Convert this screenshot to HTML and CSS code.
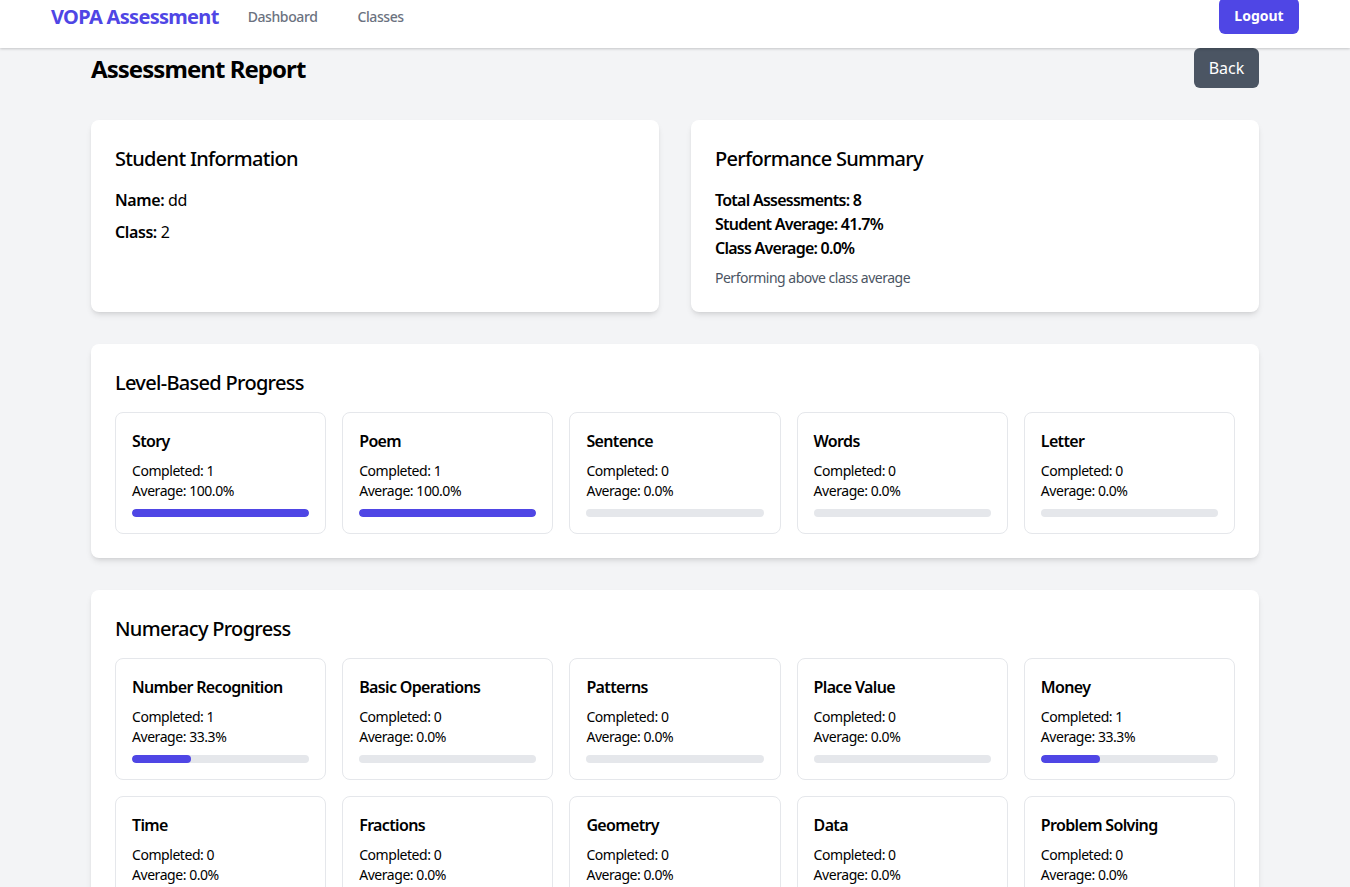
FILE: index.html
```html
<!DOCTYPE html>
<html lang="en">
<head>
<meta charset="utf-8">
<title>VOPA Assessment - Assessment Report</title>
<link rel="stylesheet" href="styles.css">
</head>
<body>
<nav class="navbar">
  <div class="nav-inner">
    <div class="nav-left">
      <span class="logo">VOPA Assessment</span>
      <a class="nav-link" href="#">Dashboard</a>
      <a class="nav-link" href="#">Classes</a>
    </div>
    <button class="btn btn-primary">Logout</button>
  </div>
</nav>
<main class="main">
  <div class="page-header">
    <h1 class="page-title">Assessment Report</h1>
    <button class="btn btn-back">Back</button>
  </div>

  <div class="info-grid">
    <section class="card">
      <h2 class="card-title">Student Information</h2>
      <div class="info-list">
        <p><strong>Name:</strong> dd</p>
        <p><strong>Class:</strong> 2</p>
      </div>
    </section>
    <section class="card">
      <h2 class="card-title">Performance Summary</h2>
      <p class="stat">Total Assessments: 8</p>
      <p class="stat">Student Average: 41.7%</p>
      <p class="stat">Class Average: 0.0%</p>
      <p class="note">Performing above class average</p>
    </section>
  </div>

  <section class="card section">
    <h2 class="card-title">Level-Based Progress</h2>
    <div class="progress-grid">
      <div class="p-card"><h3>Story</h3><p>Completed: 1</p><p>Average: 100.0%</p><div class="bar"><div class="fill" style="width:100%"></div></div></div>
      <div class="p-card"><h3>Poem</h3><p>Completed: 1</p><p>Average: 100.0%</p><div class="bar"><div class="fill" style="width:100%"></div></div></div>
      <div class="p-card"><h3>Sentence</h3><p>Completed: 0</p><p>Average: 0.0%</p><div class="bar"><div class="fill" style="width:0%"></div></div></div>
      <div class="p-card"><h3>Words</h3><p>Completed: 0</p><p>Average: 0.0%</p><div class="bar"><div class="fill" style="width:0%"></div></div></div>
      <div class="p-card"><h3>Letter</h3><p>Completed: 0</p><p>Average: 0.0%</p><div class="bar"><div class="fill" style="width:0%"></div></div></div>
    </div>
  </section>

  <section class="card section">
    <h2 class="card-title">Numeracy Progress</h2>
    <div class="progress-grid">
      <div class="p-card"><h3>Number Recognition</h3><p>Completed: 1</p><p>Average: 33.3%</p><div class="bar"><div class="fill" style="width:33.3%"></div></div></div>
      <div class="p-card"><h3>Basic Operations</h3><p>Completed: 0</p><p>Average: 0.0%</p><div class="bar"><div class="fill" style="width:0%"></div></div></div>
      <div class="p-card"><h3>Patterns</h3><p>Completed: 0</p><p>Average: 0.0%</p><div class="bar"><div class="fill" style="width:0%"></div></div></div>
      <div class="p-card"><h3>Place Value</h3><p>Completed: 0</p><p>Average: 0.0%</p><div class="bar"><div class="fill" style="width:0%"></div></div></div>
      <div class="p-card"><h3>Money</h3><p>Completed: 1</p><p>Average: 33.3%</p><div class="bar"><div class="fill" style="width:33.3%"></div></div></div>
      <div class="p-card"><h3>Time</h3><p>Completed: 0</p><p>Average: 0.0%</p><div class="bar"><div class="fill" style="width:0%"></div></div></div>
      <div class="p-card"><h3>Fractions</h3><p>Completed: 0</p><p>Average: 0.0%</p><div class="bar"><div class="fill" style="width:0%"></div></div></div>
      <div class="p-card"><h3>Geometry</h3><p>Completed: 0</p><p>Average: 0.0%</p><div class="bar"><div class="fill" style="width:0%"></div></div></div>
      <div class="p-card"><h3>Data</h3><p>Completed: 0</p><p>Average: 0.0%</p><div class="bar"><div class="fill" style="width:0%"></div></div></div>
      <div class="p-card"><h3>Problem Solving</h3><p>Completed: 0</p><p>Average: 0.0%</p><div class="bar"><div class="fill" style="width:0%"></div></div></div>
    </div>
  </section>
</main>
</body>
</html>
```

FILE: styles.css
```css
* { box-sizing: border-box; }
html, body { margin: 0; padding: 0; }
body {
  background: #f3f4f6;
  font-family: "Noto Sans", "Open Sans", sans-serif;
  color: #000;
  font-size: 16px;
  line-height: 24px;
}
p, h1, h2, h3 { margin: 0; }

.navbar {
  background: #fff;
  height: 64px;
  margin-top: -16px;
  box-shadow: 0 1px 3px rgba(0,0,0,0.12), 0 1px 2px rgba(0,0,0,0.08);
  position: relative;
  z-index: 1;
}
.nav-inner {
  max-width: 1280px;
  margin: 0 auto;
  padding: 0 16px;
  height: 64px;
  display: flex;
  align-items: center;
  justify-content: space-between;
}
.nav-left { display: flex; align-items: center; padding-top: 2px; }
.logo {
  color: #4f46e5;
  font-size: 20px;
  line-height: 28px;
  font-weight: 700;
  letter-spacing: -0.7px;
}
.nav-link {
  color: #6b7280;
  text-decoration: none;
  font-size: 14px;
  font-weight: 500;
  line-height: 20px;
  margin-left: 29px;
  letter-spacing: -0.4px;
}
.nav-link + .nav-link { margin-left: 40px; }

.btn {
  border: none;
  border-radius: 6px;
  font-family: inherit;
  cursor: pointer;
  color: #fff;
}
.btn-primary {
  background: #4f46e5;
  font-size: 14px;
  font-weight: 700;
  line-height: 20px;
  height: 36px;
  width: 80px;
  padding: 0;
}
.btn-back {
  background: #4b5563;
  font-size: 16px;
  line-height: 24px;
  height: 40px;
  width: 65px;
  padding: 0;
}

.main {
  max-width: 1168px;
  margin: 0 auto;
}
.page-header {
  display: flex;
  align-items: center;
  justify-content: space-between;
  height: 40px;
  margin-bottom: 32px;
}
.page-title {
  font-size: 24px;
  line-height: 32px;
  font-weight: 700;
  letter-spacing: -0.95px;
  padding-top: 2px;
}

.card {
  background: #fff;
  border-radius: 8px;
  padding: 24px;
  box-shadow: 0 4px 6px -1px rgba(0,0,0,0.1), 0 2px 4px -2px rgba(0,0,0,0.1);
}
.card-title {
  font-size: 20px;
  line-height: 28px;
  font-weight: 500;
  padding-top: 1px;
  margin-bottom: 15px;
  letter-spacing: -0.7px;
}
.info-grid {
  display: grid;
  grid-template-columns: 1fr 1fr;
  gap: 32px;
  margin-bottom: 32px;
}
.info-list { display: flex; flex-direction: column; gap: 8px; letter-spacing: -0.4px; }
.info-list strong { font-weight: 600; }
.stat { font-weight: 600; letter-spacing: -0.75px; }
.note {
  margin-top: 8px;
  font-size: 14px;
  line-height: 20px;
  color: #4b5563;
  letter-spacing: -0.5px;
}

.section { margin-bottom: 32px; }
.progress-grid {
  display: grid;
  grid-template-columns: repeat(5, 1fr);
  gap: 16px;
}
.p-card {
  border: 1px solid #e5e7eb;
  border-radius: 8px;
  padding: 16px;
}
.p-card h3 {
  font-size: 16px;
  line-height: 24px;
  font-weight: 600;
  margin-bottom: 8px;
  letter-spacing: -0.65px;
}
.p-card p {
  font-size: 14px;
  line-height: 20px;
  letter-spacing: -0.45px;
}
.bar {
  margin-top: 8px;
  height: 8px;
  background: #e5e7eb;
  border-radius: 9999px;
  overflow: hidden;
}
.fill {
  height: 100%;
  background: #4f46e5;
  border-radius: 9999px;
}
```
